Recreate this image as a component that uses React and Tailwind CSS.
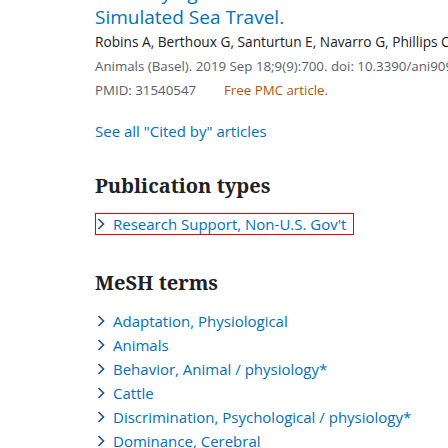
export default function App() {
  const sans = { fontFamily: '"Open Sans", "Noto Sans", sans-serif' };
  const serif = { fontFamily: '"Noto Serif", "DejaVu Serif", serif' };
  const mesh = [
    "Adaptation, Physiological",
    "Animals",
    "Behavior, Animal / physiology*",
    "Cattle",
    "Discrimination, Psychological / physiology*",
    "Dominance, Cerebral",
  ];
  const Chevron = () => (
    <svg width="8" height="12" viewBox="0 0 8 12" className="shrink-0">
      <path d="M1.5 1 L6.5 6 L1.5 11" fill="none" stroke="#205493" strokeWidth="1.7" />
    </svg>
  );
  return (
    <div className="w-[448px] h-[448px] overflow-hidden bg-white pl-[95px]" style={sans}>
      <div className="-mt-[19px] text-[19px] leading-[24px] text-[#0071bc] whitespace-nowrap">
        Cattle Lying Preferences in
      </div>
      <div className="text-[19px] leading-[24px] text-[#0071bc] whitespace-nowrap">
        Simulated Sea Travel.
      </div>
      <div className="mt-[1px] leading-[24px] whitespace-nowrap">
        <div className="text-[13.7px] text-[#212121]">Robins A, Berthoux G, Santurtun E, Navarro G, Phillips CJC.</div>
        <div className="text-[13.3px] text-[#5b616b]">Animals (Basel). 2019 Sep 18;9(9):700. doi: 10.3390/ani9090700.</div>
        <div className="flex text-[13.3px]">
          <span className="text-[#5b616b] w-[129px]">PMID: 31540547</span>
          <span className="text-[#b85300]">Free PMC article.</span>
        </div>
      </div>
      <div className="mt-[17px] text-[15px] leading-[24px] text-[#0071bc] whitespace-nowrap">
        See all "Cited by" articles
      </div>
      <h2 className="mt-[29px] text-[20px] leading-[28px] font-bold text-[#212121]" style={serif}>
        Publication types
      </h2>
      <div className="mt-[13px] w-[259px] h-[22px] border border-[#e00000] flex items-center gap-[8px] pl-[1px] text-[15px] leading-[20px] text-[#0071bc] whitespace-nowrap">
        <Chevron />
        <span>Research Support, Non-U.S. Gov't</span>
      </div>
      <h2 className="mt-[34px] text-[20px] leading-[28px] font-bold text-[#212121]" style={serif}>
        MeSH terms
      </h2>
      <ul className="mt-[12px] text-[15px] leading-[24px] text-[#0071bc] whitespace-nowrap">
        {mesh.map((m) => (
          <li key={m} className="flex items-center gap-[8px] pl-[2px] h-[24px]">
            <Chevron />
            <span>{m}</span>
          </li>
        ))}
      </ul>
    </div>
  );
}
